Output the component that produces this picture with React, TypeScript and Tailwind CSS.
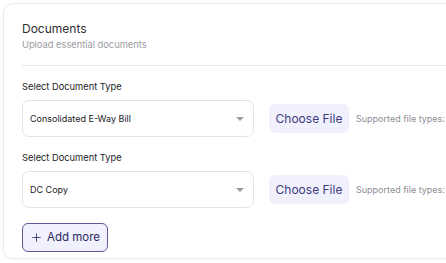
import { Plus } from 'lucide-react';

const rows = [
  { id: 1, value: 'Consolidated E-Way Bill' },
  { id: 2, value: 'DC Copy' },
];

export default function App() {
  return (
    <div className="w-[446px] h-[263px] overflow-hidden bg-white font-['Inter',sans-serif] pt-[3px] pl-[3px]">
      <div className="w-[470px] h-[256px] rounded-[10px] border border-[#ececec] bg-white shadow-[0_1px_3px_rgba(0,0,0,0.04)] pl-[18px] pt-[17px]">
        <h2 className="text-[12px] leading-[16px] text-[#2f2f33]">Documents</h2>
        <p className="mt-[2px] text-[9.3px] leading-[12px] text-[#9a9aa0]">Upload essential documents</p>
        <div className="mt-[14px] h-px bg-[#e6e6e6]"></div>

        <div className="mt-[15px] flex flex-col gap-[15px]">
          {rows.map(r => (
            <div key={r.id} className="flex flex-col">
              <label className="text-[9.3px] leading-[12px] text-[#222226]">Select Document Type</label>
              <div className="mt-[7px] flex items-center">
                <div className="w-[232px] h-[37px] rounded-[7px] border border-[#e4e4e7] flex items-center justify-between pl-[7px] pr-[9px]">
                  <span className="text-[9px] text-[#222226]">{r.value}</span>
                  <span className="w-0 h-0 border-l-[4px] border-r-[4px] border-t-[4px] border-l-transparent border-r-transparent border-t-[#9a9aa0]"></span>
                </div>
                <button className="ml-[15px] w-[80px] h-[29px] rounded-[6px] bg-[#f1f0fd] text-[12px] text-[#3d3a80]">Choose File</button>
                <span className="ml-[7px] text-[9px] text-[#8e8e95] whitespace-nowrap">Supported file types:</span>
              </div>
            </div>
          ))}
        </div>

        <button className="mt-[15px] h-[29px] w-[86px] rounded-[6px] border border-[#5d5b94] bg-[#f1f0fd] flex items-center justify-center gap-[4px] text-[11.5px] text-[#2b2960]">
          <Plus size={13} strokeWidth={1.5} />
          Add more
        </button>
      </div>
    </div>
  );
}
